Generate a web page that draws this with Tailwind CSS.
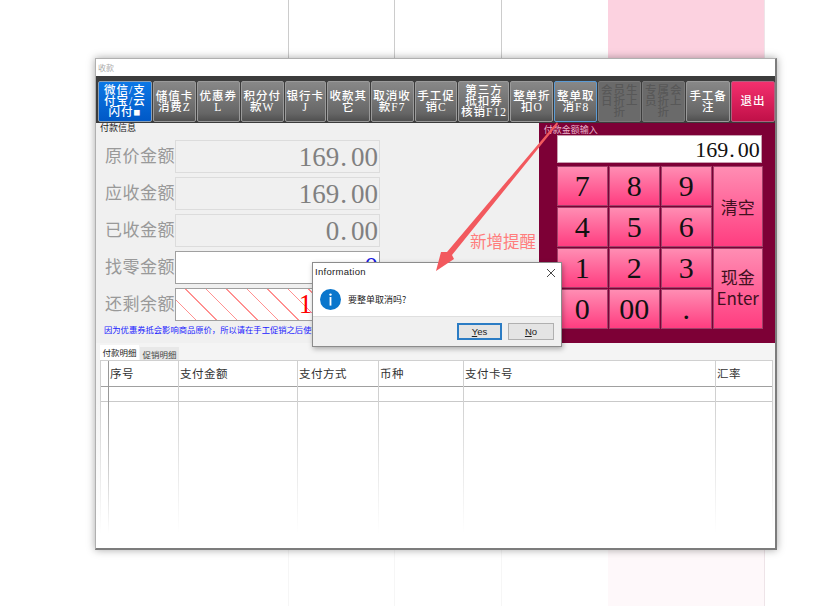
<!DOCTYPE html>
<html lang="zh-CN">
  <head>
    <meta charset="UTF-8" />
    <title>收款</title>
    <script src="https://cdn.jsdelivr.net/npm/@tailwindcss/browser@4"></script>
  </head>
  <body class="relative w-[829px] h-[606px] overflow-hidden bg-white font-['Liberation_Serif','Noto_Sans_CJK_SC',serif]">
    <!-- page behind the window -->
    <div class="absolute inset-0 flex pl-[288px]">
      <div class="w-px h-full bg-[linear-gradient(#cccccc_58px,#f6f6f6_550px)]"></div>
      <div class="w-[105px]"></div>
      <div class="w-px h-full bg-[linear-gradient(#cccccc_58px,#f6f6f6_550px)]"></div>
      <div class="w-[106px]"></div>
      <div class="w-px h-full bg-[linear-gradient(#cccccc_58px,#f6f6f6_550px)]"></div>
      <div class="w-[106px]"></div>
      <div class="w-[157px] h-full bg-[linear-gradient(#fcd2e0_58px,#fef8fa_550px)] border-r border-[#eee4e8]"></div>
    </div>

    <!-- window -->
    <div class="relative ml-[95px] top-[58px] w-[682px] h-[492px] bg-[#f0f0f0] border border-[#b0b0b0] border-r-2 border-b-2 border-r-[#7c7c7c] border-b-[#7c7c7c] shadow-[0_0_8px_rgba(0,0,0,0.35)] flex flex-col">
      <div class="h-[17px] bg-white text-[8px] leading-[17px] pl-[2px] text-[#aaaaaa] font-['Noto_Sans_CJK_SC',sans-serif]">收款</div>

      <!-- toolbar -->
      <div class="h-[47px] bg-[#3c3c3c] flex gap-px pl-[2px] pt-[5px] pb-[1px] text-[11.5px] leading-[11px] tracking-[1px] text-white text-center font-medium">
        <div class="w-[54px] flex items-center justify-center rounded-[2px] border border-[#8aa0b8] bg-[linear-gradient(#0c78e6,#0058c6)]">微信/支<br />付宝/云<br />闪付■</div>
        <div class="w-[43px] flex items-center justify-center rounded-[2px] border border-[#9a9a9a] bg-[linear-gradient(#888888,#666666_80%,#505050)]">储值卡<br />消费Z</div>
        <div class="w-[43px] flex items-center justify-center rounded-[2px] border border-[#9a9a9a] bg-[linear-gradient(#888888,#666666_80%,#505050)]">优惠券<br />L</div>
        <div class="w-[43px] flex items-center justify-center rounded-[2px] border border-[#9a9a9a] bg-[linear-gradient(#888888,#666666_80%,#505050)]">积分付<br />款W</div>
        <div class="w-[41px] flex items-center justify-center rounded-[2px] border border-[#9a9a9a] bg-[linear-gradient(#888888,#666666_80%,#505050)]">银行卡<br />J</div>
        <div class="w-[43px] flex items-center justify-center rounded-[2px] border border-[#9a9a9a] bg-[linear-gradient(#888888,#666666_80%,#505050)]">收款其<br />它</div>
        <div class="w-[43px] flex items-center justify-center rounded-[2px] border border-[#9a9a9a] bg-[linear-gradient(#888888,#666666_80%,#505050)]">取消收<br />款F7</div>
        <div class="w-[43px] flex items-center justify-center rounded-[2px] border border-[#9a9a9a] bg-[linear-gradient(#888888,#666666_80%,#505050)]">手工促<br />销C</div>
        <div class="w-[51px] flex items-center justify-center rounded-[2px] border border-[#9a9a9a] bg-[linear-gradient(#888888,#666666_80%,#505050)]">第三方<br />抵扣券<br />核销F12</div>
        <div class="w-[43px] flex items-center justify-center rounded-[2px] border border-[#9a9a9a] bg-[linear-gradient(#888888,#666666_80%,#505050)]">整单折<br />扣O</div>
        <div class="w-[43px] flex items-center justify-center rounded-[2px] border border-[#5b9bd5] bg-[linear-gradient(#888888,#666666_80%,#505050)]">整单取<br />消F8</div>
        <div class="w-[43px] flex items-center justify-center rounded-[2px] border border-[#7a7a7a] bg-[#6a6a6a] text-[#585858]">会员生<br />日折上<br />折</div>
        <div class="w-[43px] flex items-center justify-center rounded-[2px] border border-[#7a7a7a] bg-[#6a6a6a] text-[#585858]">专属会<br />员折上<br />折</div>
        <div class="w-[44px] flex items-center justify-center rounded-[2px] border border-[#9a9a9a] bg-[linear-gradient(#888888,#666666_80%,#505050)]">手工备<br />注</div>
        <div class="w-[44px] flex items-center justify-center rounded-[2px] border border-[#b06080] bg-[linear-gradient(#f4306e,#c01048)]">退出</div>
      </div>

      <!-- payment area -->
      <div class="h-[220px] flex">
        <!-- payment info -->
        <div class="w-[444px] relative">
          <div class="h-[17px] pl-[4px] text-[9px] leading-[10px] text-[#222222] font-['Noto_Sans_CJK_SC',sans-serif] border-b-0">付款信息</div>
          <div class="flex flex-col gap-[4px] text-[#999999] text-[17px] tracking-[0.5px]">
            <div class="flex items-center h-[33px]">
              <span class="w-[79px] pl-[9px] pb-[4px] shrink-0 font-['Noto_Sans_CJK_SC',sans-serif]">原价金额</span>
              <div class="w-[205px] h-full border border-[#dcdcdc] text-right pr-[1px] text-[27px] leading-[32px] tracking-normal text-[#808080]">169<span class="ml-px mr-[4px]">.</span>00</div>
            </div>
            <div class="flex items-center h-[33px]">
              <span class="w-[79px] pl-[9px] pb-[4px] shrink-0 font-['Noto_Sans_CJK_SC',sans-serif]">应收金额</span>
              <div class="w-[205px] h-full border border-[#dcdcdc] text-right pr-[1px] text-[27px] leading-[32px] tracking-normal text-[#808080]">169<span class="ml-px mr-[4px]">.</span>00</div>
            </div>
            <div class="flex items-center h-[33px]">
              <span class="w-[79px] pl-[9px] pb-[4px] shrink-0 font-['Noto_Sans_CJK_SC',sans-serif]">已收金额</span>
              <div class="w-[205px] h-full border border-[#dcdcdc] text-right pr-[1px] text-[27px] leading-[32px] tracking-normal text-[#808080]">0<span class="ml-px mr-[4px]">.</span>00</div>
            </div>
            <div class="flex items-center h-[33px]">
              <span class="w-[79px] pl-[9px] pb-[4px] shrink-0 font-['Noto_Sans_CJK_SC',sans-serif]">找零金额</span>
              <div class="w-[205px] h-full bg-white border border-[#a0a0a0] text-right pr-[1px] text-[27px] leading-[30px] tracking-normal text-[#1a1ae0]">0</div>
            </div>
            <div class="flex items-center h-[33px]">
              <span class="w-[79px] pl-[9px] pb-[4px] shrink-0 font-['Noto_Sans_CJK_SC',sans-serif]">还剩余额</span>
              <div class="w-[205px] h-full border border-[#a0a0a0] text-right pr-[1px] text-[27px] leading-[30px] tracking-normal text-[#ff0000] bg-[repeating-linear-gradient(45deg,#ffffff_0px,#ffffff_13.5px,#ff9090_13.5px,#ff9090_14.5px)]">169<span class="ml-px mr-[4px]">.</span>00</div>
            </div>
          </div>
          <div class="pl-[8px] pt-[2px] text-[8.3px] leading-[13px] text-[#1a1aff] whitespace-nowrap font-['Noto_Sans_CJK_SC',sans-serif]">因为优惠券抵会影响商品原价，所以请在手工促销之后使</div>
        </div>

        <!-- numeric pad -->
        <div class="w-[237px] bg-[#7d0036] pt-[3px] pl-[18px] relative">
          <div class="absolute left-[5px] top-[1px] text-[9px] leading-[12px] text-[#e9b4ca] font-['Noto_Sans_CJK_SC',sans-serif]">付款金额输入</div>
          <div class="mt-[9px] w-[205px] h-[28px] bg-white text-right pr-[1px] text-[22px] leading-[28px] text-[#111111] border border-[#c8a0b0]">169<span class="ml-px mr-[3px]">.</span>00</div>
          <div class="mt-[3px] grid grid-cols-[51px_51px_51px_50px] grid-rows-[40px_40px_40px_40px] gap-px text-[30px] text-[#111111] text-center leading-[38px]">
            <div class="border border-[#a04068] bg-[linear-gradient(#ff8db3,#ff3d80)]">7</div>
            <div class="border border-[#a04068] bg-[linear-gradient(#ff8db3,#ff3d80)]">8</div>
            <div class="border border-[#a04068] bg-[linear-gradient(#ff8db3,#ff3d80)]">9</div>
            <div class="row-span-2 flex items-center justify-center border border-[#a04068] bg-[linear-gradient(#ff8db3,#ff3d80)] text-[17px] text-[#401020] font-['Noto_Sans_CJK_SC',sans-serif]">清空</div>
            <div class="border border-[#a04068] bg-[linear-gradient(#ff8db3,#ff3d80)]">4</div>
            <div class="border border-[#a04068] bg-[linear-gradient(#ff8db3,#ff3d80)]">5</div>
            <div class="border border-[#a04068] bg-[linear-gradient(#ff8db3,#ff3d80)]">6</div>
            <div class="border border-[#a04068] bg-[linear-gradient(#ff8db3,#ff3d80)]">1</div>
            <div class="border border-[#a04068] bg-[linear-gradient(#ff8db3,#ff3d80)]">2</div>
            <div class="border border-[#a04068] bg-[linear-gradient(#ff8db3,#ff3d80)]">3</div>
            <div class="row-span-2 flex items-center justify-center text-center pb-[3px] border border-[#a04068] bg-[linear-gradient(#ff8db3,#ff3d80)] text-[17px] leading-[21px] text-[#401020] font-['Noto_Sans_CJK_SC',sans-serif]"><span>现金<br />Enter</span></div>
            <div class="border border-[#a04068] bg-[linear-gradient(#ff8db3,#ff3d80)]">0</div>
            <div class="border border-[#a04068] bg-[linear-gradient(#ff8db3,#ff3d80)]">00</div>
            <div class="border border-[#a04068] bg-[linear-gradient(#ff8db3,#ff3d80)]">.</div>
          </div>
        </div>
      </div>

      <!-- detail tabs -->
      <div class="flex-1 flex flex-col pl-[4px] pr-[2px] pt-[2px] relative bg-[#f4f4f4]">
        <div class="h-[15px] flex items-end text-[8.5px] leading-[14px] font-['Noto_Sans_CJK_SC',sans-serif]">
          <div class="w-[39px] h-[15px] bg-white text-center text-[#222222]">付款明细</div>
          <div class="w-[39px] h-[13px] ml-px bg-[#e8e8e8] text-center text-[#444444]">促销明细</div>
        </div>
        <div class="flex-1 bg-white border border-[#d0d0d0] mb-[3px] text-[11.5px] text-[#333333] tracking-[0.5px] font-['Noto_Sans_CJK_SC',sans-serif] flex">
          <div class="w-[8px] border-r border-[#999999] flex flex-col">
            <div class="h-[26px] border-b border-[#a0a0a0]"></div>
            <div class="h-[15px] border-b border-[#c8c8c8]"></div>
          </div>
          <div class="w-[70px] border-r border-[#d0d0d0] flex flex-col">
            <div class="h-[26px] pl-px leading-[25px] border-b border-[#a0a0a0]">序号</div>
            <div class="h-[15px] border-b border-[#c8c8c8]"></div>
          </div>
          <div class="w-[119px] border-r border-[#d0d0d0] flex flex-col">
            <div class="h-[26px] pl-px leading-[25px] border-b border-[#a0a0a0]">支付金额</div>
            <div class="h-[15px] border-b border-[#c8c8c8]"></div>
          </div>
          <div class="w-[81px] border-r border-[#d0d0d0] flex flex-col">
            <div class="h-[26px] pl-px leading-[25px] border-b border-[#a0a0a0]">支付方式</div>
            <div class="h-[15px] border-b border-[#c8c8c8]"></div>
          </div>
          <div class="w-[85px] border-r border-[#d0d0d0] flex flex-col">
            <div class="h-[26px] pl-px leading-[25px] border-b border-[#a0a0a0]">币种</div>
            <div class="h-[15px] border-b border-[#c8c8c8]"></div>
          </div>
          <div class="w-[252px] border-r border-[#d0d0d0] flex flex-col">
            <div class="h-[26px] pl-px leading-[25px] border-b border-[#a0a0a0]">支付卡号</div>
            <div class="h-[15px] border-b border-[#c8c8c8]"></div>
          </div>
          <div class="flex-1 flex flex-col">
            <div class="h-[26px] pl-px leading-[25px] border-b border-[#a0a0a0]">汇率</div>
            <div class="h-[15px] border-b border-[#c8c8c8]"></div>
          </div>
        </div>
        <!-- screenshot fades out towards the bottom -->
        <div class="absolute inset-x-0 bottom-0 h-[150px] bg-[linear-gradient(transparent,#ffffff_90%)]"></div>
      </div>

      <!-- message box -->
      <div class="absolute left-[216px] top-[203px] w-[250px] h-[85px] border border-[#8c8c8c] bg-white shadow-[1px_2px_5px_rgba(0,0,0,0.3)] flex flex-col font-['Noto_Sans_CJK_SC',sans-serif]">
        <div class="h-[17px] flex items-center justify-between px-[2px] pt-[1px] text-[9.5px] text-[#222222] font-['Liberation_Sans',sans-serif]">
          <span class="tracking-[0.3px]">Information</span>
          <svg class="w-[10px] h-[10px] mr-[3px] mt-[1px]" viewBox="0 0 10 10" fill="none" stroke="#333333" stroke-width="0.9"><path d="M1 1L9 9M9 1L1 9" /></svg>
        </div>
        <div class="h-[36px] flex items-center pl-[7px] pt-[3px] gap-[7px] text-[9px] text-[#222222]">
          <svg class="w-[21px] h-[21px]" viewBox="0 0 21 21"><circle cx="10.5" cy="10.5" r="10.5" fill="#0a76cc" /><circle cx="10.5" cy="5.6" r="1.2" fill="#ffffff" /><rect x="9.6" y="8" width="1.8" height="8.6" fill="#ffffff" /></svg>
          <span>要整单取消吗?</span>
        </div>
        <div class="flex-1 bg-[#f0f0f0] border-t border-[#dfdfdf] flex justify-end items-center gap-[6px] pr-[7px] text-[9.5px] text-[#222222] font-['Liberation_Sans',sans-serif]">
          <div class="w-[45px] h-[17px] border-2 border-[#2b7cc4] bg-[#e4e4e4] text-center leading-[13px]"><span class="underline">Y</span>es</div>
          <div class="w-[46px] h-[17px] border border-[#b0b0b0] bg-[#e4e4e4] text-center leading-[15px]"><span class="underline">N</span>o</div>
        </div>
      </div>

      <!-- annotation over the window -->
      <span class="absolute left-[374px] top-[171px] text-[16.5px] leading-[22px] text-[#ff7d7d] font-['Noto_Sans_CJK_SC',sans-serif]">新增提醒</span>
      <svg class="absolute left-[335px] top-[62px] w-[130px] h-[154px]" viewBox="0 0 130 154" fill="#f2595e">
        <polygon points="126,1 127,3 21,134 23,138 5,150 10,131 16,131" />
      </svg>
    </div>
  </body>
</html>
